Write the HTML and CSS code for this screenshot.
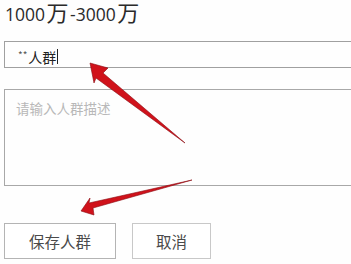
FILE: index.html
```html
<!DOCTYPE html>
<html lang="zh">
<head>
<meta charset="utf-8">
<link rel="stylesheet" href="styles.css">
</head>
<body>
<div class="page">
  <div class="title">1000<span class="cjk">万</span>-3000<span class="cjk">万</span></div>
  <div class="field"><span class="stars">**</span>人群<span class="caret"></span></div>
  <div class="area"><span class="placeholder">请输入人群描述</span></div>
  <div class="actions">
    <div class="btn btn-save">保存人群</div>
    <div class="btn btn-cancel">取消</div>
  </div>
  <svg class="arrows" width="351" height="264" viewBox="0 0 351 264">
    <polygon points="90,63 108,68 103,73 185,143 96,78 94,83" fill="#d0121b" stroke="#8a0a10" stroke-width="0.6" stroke-linejoin="round"/>
    <polygon points="81,211 90,198 89,203 192,180 93,208 94,215" fill="#d0121b" stroke="#8a0a10" stroke-width="0.6" stroke-linejoin="round"/>
  </svg>
</div>
</body>
</html>
```
FILE: styles.css
```css
html, body {
  margin: 0;
  padding: 0;
  background: #fefefe;
  overflow: hidden;
}
.page {
  position: relative;
  width: 351px;
  height: 264px;
  overflow: hidden;
  padding-left: 4px;
  box-sizing: border-box;
  font-family: "Noto Sans", "Noto Sans CJK SC", sans-serif;
  color: #333;
}
.title {
  font-family: "Open Sans", "Noto Sans CJK SC", sans-serif;
  font-weight: 400;
  font-size: 17.5px;
  line-height: 22px;
  height: 22px;
  padding-left: 1px;
  color: #2a2a2a;
  white-space: nowrap;
}
.cjk {
  font-family: "Noto Sans CJK SC", sans-serif;
  font-size: 22px;
  margin: 0 1.5px;
}
.field {
  margin-top: 19px;
  width: 420px;
  height: 27px;
  box-sizing: border-box;
  border: 1px solid #a0a0a0;
  border-left-width: 1.5px;
  display: flex;
  align-items: center;
  padding-left: 13px;
  padding-top: 4px;
  font-size: 14px;
  font-family: "Noto Sans CJK SC", sans-serif;
  color: #222;
}
.stars {
  font-size: 10px;
  color: #555;
  align-self: center;
  margin-right: 1px;
  margin-top: -4px;
}
.caret {
  display: inline-block;
  width: 1px;
  height: 15px;
  background: #222;
  margin-left: 1px;
}
.area {
  margin-top: 21px;
  width: 420px;
  height: 97px;
  box-sizing: border-box;
  border: 1px solid #a8a8a8;
  padding: 7px 0 0 11px;
}
.placeholder {
  font-family: "Noto Sans CJK SC", sans-serif;
  font-size: 13.5px;
  line-height: 18px;
  color: #b8b8b8;
}
.actions {
  margin-top: 37px;
  display: flex;
  gap: 16px;
}
.btn {
  height: 36px;
  box-sizing: border-box;
  border: 1px solid #b4b4b4;
  display: flex;
  align-items: center;
  justify-content: center;
  font-family: "Noto Sans CJK SC", sans-serif;
  font-size: 15.5px;
  color: #4a4a4a;
  background: #fff;
}
.btn-save { width: 112px; }
.btn-cancel { width: 79px; border-color: #c8c8c8; }
.arrows {
  position: absolute;
  left: 0;
  top: 0;
  pointer-events: none;
}
```
